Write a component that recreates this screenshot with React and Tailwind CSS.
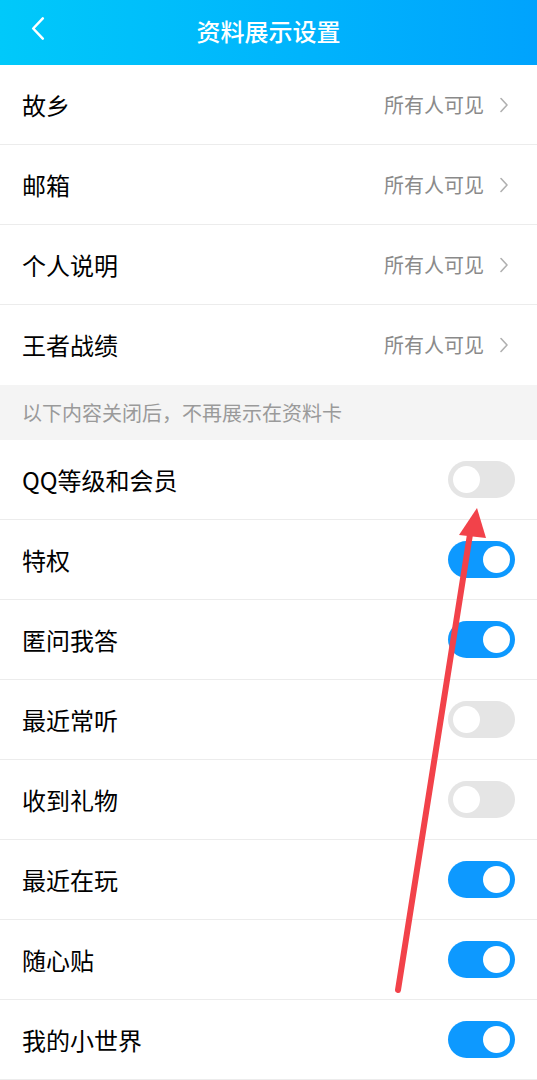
const visibleRows = ["故乡", "邮箱", "个人说明", "王者战绩"];

const toggleRows = [
  { label: "QQ等级和会员", on: false },
  { label: "特权", on: true },
  { label: "匿问我答", on: true },
  { label: "最近常听", on: false },
  { label: "收到礼物", on: false },
  { label: "最近在玩", on: true },
  { label: "随心贴", on: true },
  { label: "我的小世界", on: true },
];

function Toggle({ on }) {
  return (
    <span
      className={`flex h-[37px] w-[67px] items-center rounded-full px-[5px] ${
        on ? "justify-end bg-[#0d99ff]" : "justify-start bg-[#e5e5e5]"
      }`}
    >
      <span className="h-[27px] w-[27px] rounded-full bg-white" />
    </span>
  );
}

function Chevron({ className, stroke = "#b0b0b0", width = 1.6 }) {
  return (
    <svg viewBox="0 0 8 16" className={className} fill="none">
      <path d="M1 1.5 L7 8 L1 14.5" stroke={stroke} strokeWidth={width} strokeLinecap="round" strokeLinejoin="round" />
    </svg>
  );
}

export default function App() {
  return (
    <div
      className="relative h-[1080px] w-[537px] overflow-hidden bg-white"
      style={{ fontFamily: '"Noto Sans CJK SC", "Noto Sans", sans-serif' }}
    >
      <header className="relative flex h-[65px] items-center justify-center bg-gradient-to-r from-[#00c9fa] to-[#00a3fd] pb-[3px]">
        <svg viewBox="0 0 14 24" className="absolute left-[31px] top-[17px] h-[23px] w-[14px]" fill="none">
          <path d="M12 1.5 L2 12 L12 22.5" stroke="white" strokeWidth="2.6" strokeLinecap="round" strokeLinejoin="round" />
        </svg>
        <h1 className="text-[24px] font-medium text-white">资料展示设置</h1>
      </header>

      <section>
        {visibleRows.map((label, i) => (
          <div
            key={label}
            className={`flex h-[80px] items-center justify-between pl-[22px] pr-[29px] ${
              i < visibleRows.length - 1 ? "border-b border-[#ececec]" : "h-[79px]"
            }`}
          >
            <span className="text-[24px] text-black">{label}</span>
            <span className="flex items-center gap-[16px]">
              <span className="text-[20px] text-[#8a8a8a]">所有人可见</span>
              <Chevron className="h-[16px] w-[8px]" />
            </span>
          </div>
        ))}
      </section>

      <div className="flex h-[55px] items-center bg-[#f4f4f4] px-[22px]">
        <span className="text-[20px] text-[#9a9a9a]">以下内容关闭后，不再展示在资料卡</span>
      </div>

      <section>
        {toggleRows.map((row) => (
          <div
            key={row.label}
            className="flex h-[80px] items-center justify-between border-b border-[#ececec] pl-[22px] pr-[22px]"
          >
            <span className="text-[24px] text-black">{row.label}</span>
            <Toggle on={row.on} />
          </div>
        ))}
      </section>

      <svg className="pointer-events-none absolute left-0 top-0 h-[1080px] w-[537px]" viewBox="0 0 537 1080">
        <line x1="398" y1="990" x2="471" y2="528" stroke="#f2424a" strokeWidth="6" strokeLinecap="round" />
        <polygon points="477,508 459,535 486,538" fill="#f2424a" />
      </svg>
    </div>
  );
}
